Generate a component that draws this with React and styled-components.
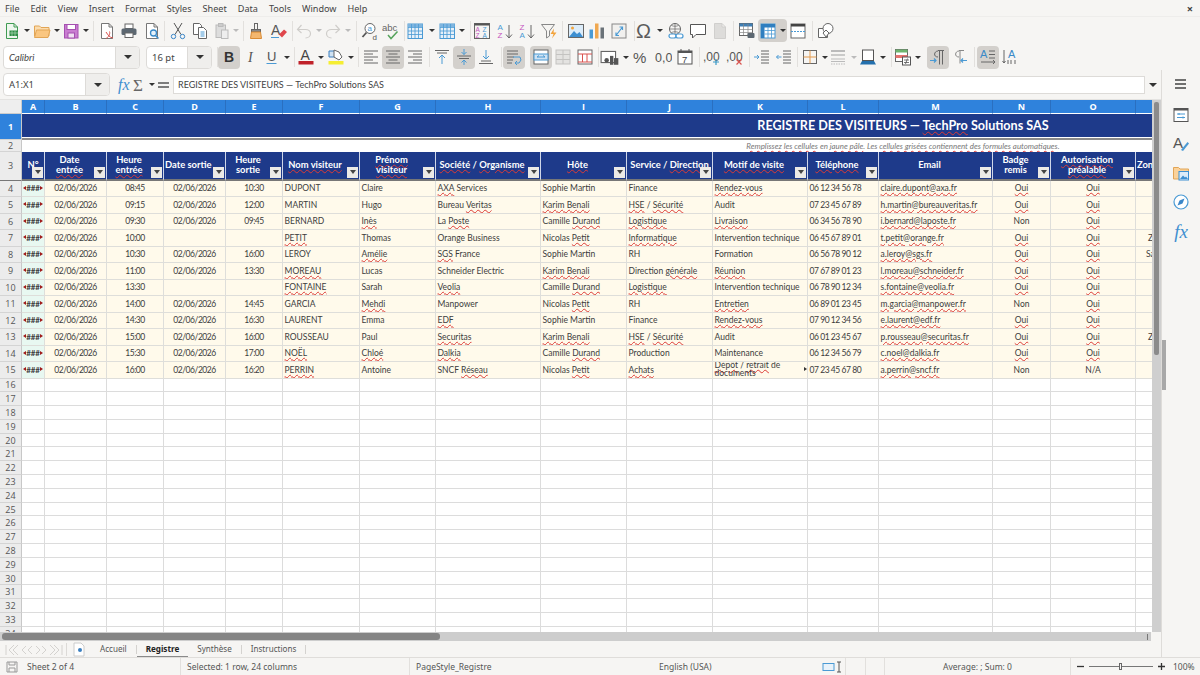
import React from 'react';
import styled, { createGlobalStyle } from 'styled-components';

const GlobalStyle = createGlobalStyle`
  html, body { margin: 0; padding: 0; background: #f6f5f3; }
  * { box-sizing: border-box; }
`;

const UI = `"Noto Sans", "Open Sans", sans-serif`;
const SHEET = `Lato, "Open Sans", sans-serif`;
const BLUE = '#4a9ad4';
const GREY = '#666';

/* ---------- icons ---------- */

const Svg = ({ children, s = 18 }) => (
  <svg width={s} height={s} viewBox="0 0 18 18" fill="none" stroke={GREY} strokeWidth="1">{children}</svg>
);
const Glyph = ({ x, y, size, color = '#555', weight = 400, family = 'Liberation Sans', italic, children }) => (
  <text x={x} y={y} fontSize={size} fill={color} stroke="none" fontWeight={weight} fontFamily={family} fontStyle={italic ? 'italic' : 'normal'}>{children}</text>
);
const Doc = ({ fill = '#fff', stroke = '#777' }) => (
  <path d="M3.5 1.5h7.5l3.5 3.5v11.5h-11zM11 1.5V5h3.5" fill={fill} stroke={stroke} />
);

const NewSheet = () => <Svg><Doc fill="#eef7ee" stroke="#3f9b52" /><rect x="6.5" y="8.5" width="8.5" height="5.5" fill="#2f8f46" stroke="none" /><path d="M9 9v5M12 9v5M7 11h8" stroke="#bfe3c6" strokeWidth=".6" /></Svg>;
const OpenFolder = () => <Svg><path d="M1.5 14V4h5l1.5 1.5h8V14z" fill="#fbdcae" stroke="#e2a555" /><path d="M1.5 15.5 3.5 8h13.5l-2 7.5z" fill="#fac680" stroke="#e2a555" /></Svg>;
const SaveDisk = () => <Svg><rect x="2.5" y="2.5" width="13.5" height="13.5" fill="#c97cd1" stroke="#a550b0" /><rect x="5" y="2.5" width="8.5" height="5" fill="#fff" stroke="#a550b0" /><rect x="6" y="11" width="6.5" height="5" fill="#f0dff2" stroke="#a550b0" /></Svg>;
const ExportPdf = () => <Svg><Doc /><path d="M8 10c2 3 3.500 5.500 7 6M8 16.500c2-1 4.500-4 3.500-7" stroke="#d9534f" /></Svg>;
const Printer = () => <Svg><rect x="5" y="2" width="8" height="4.500" fill="#fff" /><rect x="1.500" y="6.500" width="15" height="6.500" rx="1.500" fill="#5d6872" stroke="none" /><rect x="5" y="11" width="8" height="4.500" fill="#fff" /></Svg>;
const Preview = () => <Svg><Doc /><circle cx="10.500" cy="11" r="3" stroke="#3a8ac8" strokeWidth="1.300" fill="#e6f2fb" /><path d="m12.500 13.500 3 3" stroke="#3a8ac8" strokeWidth="1.500" /></Svg>;
const Scissors = () => <Svg><path d="M5 1 12 12.500M13 1 6 12.500" stroke="#555" /><circle cx="4.500" cy="14.500" r="2.200" stroke="#3a86c8" /><circle cx="13.500" cy="14.500" r="2.200" stroke="#3a86c8" /></Svg>;
const Copy = () => <Svg><path d="M2.500 1.500h6l2 2v9h-8z" fill="#fff" stroke="#666" /><path d="M7.500 5.500h5l3 3v8h-8z" fill="#fff" stroke="#666" /><path d="M9.500 10h4M9.500 12h4M9.500 14h4" stroke={BLUE} /></Svg>;
const Paste = () => <Svg><rect x="3" y="3" width="9.500" height="12.500" fill="#ddd" stroke="#bbb" /><rect x="5.500" y="1.500" width="4.500" height="3" fill="#ccc" stroke="#bbb" /><rect x="8.500" y="8" width="6.500" height="8.500" fill="#eee" stroke="#bbb" /></Svg>;
const Brush = () => <Svg><rect x="7.500" y="1.500" width="3" height="6" stroke="#666" /><rect x="4.500" y="7.500" width="9" height="2.500" fill="#888" stroke="#666" /><path d="M4.500 10h9l1 6.500h-11z" fill="#f3b76f" stroke="#d98b34" /></Svg>;
const ClearFormat = () => <Svg><Glyph x="1" y="13" size="14">A</Glyph><path d="M1 15.500h8" stroke={BLUE} /><path d="m9 12.500 5-5 3 2.500-5 5.500z" fill="#e0474c" stroke="none" /></Svg>;
const Undo = ({ flip }) => <Svg><g transform={flip ? 'translate(18 0) scale(-1 1)' : undefined}><path d="M6.500 3 2.500 7.500l4 3.500M3 7.500h7.500c3 0 5 2 5 4.200s-2 4.300-5 4.300" stroke="#cfcdca" strokeWidth="1.200" /></g></Svg>;
const Redo = () => <Undo flip />;
const FindReplace = () => <Svg><circle cx="9" cy="6.500" r="5" fill="#fff" stroke="#666" /><path d="M5.500 10.500 1.500 15" stroke="#555" strokeWidth="1.800" /><Glyph x="6.500" y="9" size="8" color={BLUE}>a</Glyph><Glyph x="11.500" y="17.500" size="8" color="#555">d</Glyph></Svg>;
const SpellCheck = () => <Svg><Glyph x="0" y="9" size="9.500" color="#666">abc</Glyph><path d="m6 13 3 3.500 6.500-7" stroke="#56a45c" strokeWidth="1.500" /></Svg>;
const GridTable = ({ head = '#7fb5df', fill = '#e6f0f9' }) => <Svg><rect x="2" y="2" width="14.500" height="14.500" fill={fill} stroke={BLUE} /><rect x="2" y="2" width="14.500" height="3" fill={head} stroke="none" /><path d="M2 5.500h14M2 9h14M2 12.500h14M5.500 2v14M9 2v14M12.500 2v14" stroke={BLUE} strokeWidth=".8" /></Svg>;
const SortGrid = () => <Svg><rect x="1.500" y="1.500" width="15" height="15" stroke="#666" /><rect x="1.500" y="1.500" width="15" height="2" fill="#555" stroke="none" /><Glyph x="2.500" y="9.500" size="6.500" color="#c555c0">A</Glyph><Glyph x="2.500" y="15.500" size="6.500" color="#c555c0">Z</Glyph><Glyph x="9.500" y="9.500" size="6.500" color={BLUE}>Z</Glyph><Glyph x="9.500" y="15.500" size="6.500" color={BLUE}>A</Glyph></Svg>;
const SortUp = ({ top = 'A', low = 'Z', topColor = BLUE, lowColor = '#c555c0' }) => <Svg><Glyph x="1.500" y="8" size="8" color={topColor}>{top}</Glyph><Glyph x="1.500" y="16" size="8" color={lowColor}>{low}</Glyph><path d="M13 3v13M10 12.500l3 3.500 3-3.500" stroke="#666" /></Svg>;
const SortDown = () => <SortUp top="Z" low="A" topColor="#c555c0" lowColor={BLUE} />;
const Funnel = () => <Svg><path d="M1.500 2.500h13L9.500 9v5l-3 2V9z" stroke="#888" /><path d="M14 6.500 10.500 12h3l-1.500 4.500L16.500 10.500h-3z" fill="#f2a33c" stroke="none" /></Svg>;
const Picture = () => <Svg><rect x="1.500" y="2.500" width="15" height="13" fill="#dcecf9" stroke="#666" /><circle cx="5.500" cy="6" r="1.500" fill="#f2a33c" stroke="none" /><path d="M2 15l5-6 3 3 2.500-2 3.500 5z" fill="#3d8fd1" stroke="none" /></Svg>;
const BarChart = () => <Svg><rect x="1.500" y="7.500" width="3.500" height="9" fill="#4a9ad4" stroke="none" /><rect x="7" y="1.500" width="3.500" height="15" fill="#f0a850" stroke="none" /><rect x="12.500" y="5.500" width="3.500" height="11" fill="#6a7278" stroke="none" /></Svg>;
const Pivot = () => <Svg><rect x="2" y="2" width="14" height="14" fill="#f1f0ee" stroke="#888" /><path d="M6 13.500 12.500 5M9.500 5h3v3M6 10.500v3h3" stroke={BLUE} strokeWidth="1.200" /></Svg>;
const Omega = () => <Svg s={20}><Glyph x="1" y="15.500" size="18" color="#5c5c5c">Ω</Glyph></Svg>;
const WebLink = () => <Svg><circle cx="8" cy="7" r="5.500" stroke="#666" /><path d="M2.500 7h11M8 1.500v11M4.500 3.500c2 1 5 1 7 0M4.500 10.500c2-1 5-1 7 0" stroke="#666" strokeWidth=".7" /><rect x="2" y="12" width="7" height="4" rx="2" fill="#fff" stroke={BLUE} strokeWidth="1.200" /><rect x="9" y="12" width="7" height="4" rx="2" fill="#fff" stroke={BLUE} strokeWidth="1.200" /></Svg>;
const Comment = () => <Svg><path d="M1.500 2.500h15v10H7l-3.500 3.500v-3.500h-2z" fill="#fff" stroke="#555" /></Svg>;
const NoteGrey = () => <Svg><Doc fill="#dddcda" stroke="#d0cfcd" /></Svg>;
const PrintArea = () => <Svg><rect x="1.500" y="1.500" width="13" height="12" fill="#fff" stroke="#666" /><rect x="1.500" y="1.500" width="13" height="3" fill="#3f7fb5" stroke="none" /><path d="M1.500 7.500h13M1.500 10.500h13M5.500 2v11M10 2v11" stroke="#888" strokeWidth=".7" /><rect x="9.500" y="11" width="7" height="5" rx="1" fill="#5d6872" stroke="none" /></Svg>;
const Freeze = () => <Svg><rect x="2" y="2" width="14" height="14" fill="#fff" stroke={BLUE} /><rect x="2" y="2" width="14" height="3.500" fill="#2f7fc0" stroke="none" /><rect x="2" y="2" width="3.500" height="14" fill="#2f7fc0" stroke="none" /><path d="M5.500 8.500h10.500M5.500 12h10.500M9 5v11M12.500 5v11" stroke={BLUE} strokeWidth=".8" /></Svg>;
const SplitWin = () => <Svg><rect x="2" y="2" width="14" height="14" fill="#fff" stroke="#666" /><rect x="2" y="2" width="14" height="2.500" fill="#444" stroke="none" /><path d="M2 9.500h14" stroke={BLUE} strokeDasharray="2 1" /></Svg>;
const Shapes = () => <Svg><path d="M1.500 6.500h9v9h-9z" stroke="#666" fill="#fff" /><circle cx="11" cy="6.500" r="5" stroke="#666" fill="#fff" /><path d="m9 8 3 3-3 4-3-4z" stroke="#666" fill="#fff" /></Svg>;

const Bold = () => <Svg><Glyph x="4" y="14" size="14" weight={700} color="#333">B</Glyph></Svg>;
const Italic = () => <Svg><Glyph x="6" y="14" size="14" family="Liberation Serif" italic color="#555">I</Glyph></Svg>;
const Underline = () => <Svg><Glyph x="4" y="12.500" size="13" color="#555">U</Glyph><path d="M3.500 15.500h10" stroke={BLUE} /></Svg>;
const FontColor = () => <Svg><Glyph x="3.500" y="12" size="14" color="#444">A</Glyph><rect x="1.500" y="13" width="15" height="3.500" fill="#c0222a" stroke="none" /></Svg>;
const Highlight = () => <Svg><path d="M2 3h6v6H2z" fill="#cfe2f3" stroke="#3a7fc0" /><path d="M7 2l5 2 3 5-3 3-5-3z" fill="#fff" stroke="#666" /><rect x="1.500" y="13" width="15" height="3.500" fill="#f5ee32" stroke="none" /></Svg>;

const lineRows = [3, 6, 9, 12, 15];
const Align = ({ side }) => (
  <Svg>
    {lineRows.map((y, i) => {
      const short = i % 2 === 1;
      const x1 = !short || side === 'left' ? 2 : side === 'center' ? 4.5 : 7;
      const x2 = !short || side === 'right' ? 16 : side === 'center' ? 13.5 : 11;
      return <path key={y} d={`M${x1} ${y}H${x2}`} stroke="#666" />;
    })}
  </Svg>
);
const AlignLeft = () => <Align side="left" />;
const AlignCenter = () => <Align side="center" />;
const AlignRight = () => <Align side="right" />;
const VTop = () => <Svg><path d="M2 2.500h14M4 5h10" stroke="#666" /><path d="M9 16V7M6 10l3-3 3 3" stroke={BLUE} /></Svg>;
const VMid = () => <Svg><path d="M2 8h14M4 10.500h10" stroke="#666" /><path d="M9 1v5.500M6.500 4 9 6.500 11.500 4M9 17v-5M6.500 14.500 9 12l2.500 2.500" stroke={BLUE} /></Svg>;
const VBottom = () => <Svg><path d="M4 13h10M2 15.500h14" stroke="#666" /><path d="M9 2v9M6 8l3 3 3-3" stroke={BLUE} /></Svg>;
const Wrap = () => <Svg><path d="M2 3h11M2 6h11M2 9h7M2 12h6M2 15h5" stroke="#666" /><path d="M8 9h7l1 3-2 3h-4M12 13l-2 2 2 2" stroke={BLUE} /></Svg>;
const Merge = () => <Svg><rect x="2" y="2" width="14" height="14" fill="#fff" stroke="#666" /><rect x="2" y="6" width="14" height="6" fill="#cfe2f3" stroke={BLUE} /><path d="M5 9h8M5 9l2-1.500M13 9l-2-1.500" stroke={BLUE} /></Svg>;
const MergeGrey = () => <Svg><rect x="2" y="2" width="14" height="14" fill="#e4e3e1" stroke="#c4c3c1" /><path d="M2 6.500h14M2 11.500h14M9 2v14" stroke="#c4c3c1" /></Svg>;
const Unmerge = () => <Svg><rect x="2" y="2" width="14" height="14" fill="#fff" stroke="#666" /><path d="M2 6h14M6.500 6v8M11 6v8M2 14h14" stroke="#d9534f" /></Svg>;
const Currency = () => <Svg s={20}><rect x="1" y="4" width="13" height="10" fill="#fff" stroke="#666" /><circle cx="6" cy="12" r="2" fill="#555" stroke="none" /><rect x="9" y="8" width="3" height="8" fill="#555" stroke="none" /><rect x="12.500" y="10" width="4" height="6" fill="#555" stroke="none" /></Svg>;
const Percent = () => <Svg><Glyph x="1" y="14.500" size="15" color="#555">%</Glyph></Svg>;
const NumberFmt = () => <Svg><Glyph x="1" y="14" size="12.500" color="#555">0,0</Glyph></Svg>;
const DateFmt = () => <Svg><rect x="2" y="3" width="14" height="13" fill="#fff" stroke="#555" /><rect x="2" y="3" width="14" height="2" fill="#555" stroke="none" /><path d="M5 1v3M13 1v3" stroke="#555" /><Glyph x="6" y="14.500" size="9.500" color="#444">7</Glyph></Svg>;
const AddDecimal = () => <Svg><Glyph x="0" y="13" size="12" color="#555">,00</Glyph><path d="M13 11v6M10 14h6" stroke="#3a9ac8" strokeWidth="1.200" /></Svg>;
const DelDecimal = () => <Svg><Glyph x="0" y="13" size="12" color="#555">,00</Glyph><path d="m10.500 11.500 5 5M15.500 11.500l-5 5" stroke="#d9534f" strokeWidth="1.200" /></Svg>;
const Indent = ({ out }) => <Svg><path d="M8 3h8M8 6h8M8 9h8M8 12h8M8 15h8" stroke="#666" /><g transform={out ? 'translate(7.500 0) scale(-1 1)' : undefined}><path d="M1 9h5M4 7l2 2-2 2" stroke={BLUE} /></g></Svg>;
const Outdent = () => <Indent out />;
const Borders = () => <Svg><rect x="2.500" y="2.500" width="13" height="13" stroke="#666" /><path d="M2.500 9h13M9 2.500v13" stroke="#e39a4c" /></Svg>;
const BorderStyle = () => <Svg><path d="M2 3h14" stroke="#bbb" strokeWidth="2" /><path d="M2 7h14" stroke="#bbb" strokeWidth="1.500" /><path d="M2 11h14M2 13.500h14" stroke="#bbb" /><path d="M2 16h14" stroke="#bbb" strokeDasharray="1.500 1" /></Svg>;
const BorderColor = () => <Svg><rect x="3.500" y="2" width="11" height="10.500" fill="#fff" stroke="#555" /><path d="M1 16.500 3 13h12l2 3.500z" fill="#2470ad" stroke="none" /></Svg>;
const CondFormat = () => <Svg><rect x="1.500" y="1.500" width="12" height="12" fill="#fff" stroke="#666" /><rect x="1.500" y="1.500" width="12" height="3" fill="#6eb56e" stroke="none" /><rect x="1.500" y="7" width="12" height="3" fill="#e5736f" stroke="none" /><rect x="8.500" y="9" width="8" height="8" fill="#fff" stroke="#555" /><path d="M10 12h5M10 14.500h5M13.500 10.500l-2 5.500" stroke="#555" strokeWidth=".8" /></Svg>;
const Ltr = () => <Svg><path d="M9 3c-4 0-5 6 0 6M9 2.500h6M10.500 2.500v14M13.500 2.500v14" stroke="#666" /><path d="M1 12.500h6M5 10.500l2 2-2 2" stroke={BLUE} strokeWidth="1.200" /></Svg>;
const Rtl = () => <Svg><path d="M8 3c-4 0-5 6 0 6M8 2.500h5M9 2.500v13" stroke="#888" /><path d="M16 12.500h-6M12 10.500l-2 2 2 2" stroke={BLUE} strokeWidth="1.200" /></Svg>;
const TextHoriz = () => <Svg><Glyph x="1" y="10" size="11" color="#3a8ac8">A</Glyph><path d="M10 3h6M10 6.500h6M10 10h6M2 14h14" stroke="#666" /><path d="M14 12l2 2-2 2" stroke="#666" /></Svg>;
const TextVert = () => <Svg><Glyph x="7" y="10" size="11" color="#3a8ac8">A</Glyph><path d="M3 2v13M1.500 13l1.500 2 1.500-2M7 12v4M10 12v4M14 12v4" stroke="#666" /></Svg>;

const Sum = () => <Svg><Glyph x="2" y="15" size="17" color="#666" family="Liberation Serif">Σ</Glyph></Svg>;
const Equals = () => <Svg><path d="M3 7h11M3 11h11" stroke="#555" strokeWidth="1.500" /></Svg>;
const Hamburger = () => <Svg><path d="M3 5h11M3 9h11M3 13h11" stroke="#444" strokeWidth="1.400" /></Svg>;
const PropsPanel = () => <Svg><rect x="2" y="2.500" width="14" height="13" fill="#fff" stroke="#555" /><rect x="2" y="2.500" width="14" height="2" fill="#555" stroke="none" /><path d="M5 8h8M5 11.500h8" stroke={BLUE} /><path d="M7 7v2M11 10.500v2" stroke={BLUE} /></Svg>;
const StylesPanel = () => <Svg><Glyph x="1" y="13" size="15" color="#555">A</Glyph><path d="m9 15 6.500-8 1.500 1.500L11 16z" fill={BLUE} stroke="none" /></Svg>;
const GalleryPanel = () => <Svg><path d="M1.500 15V3.500h5L8 5h8.500v10z" fill="#fbd29a" stroke="#e2a555" /><rect x="7" y="7.500" width="9.500" height="8.500" fill="#dcecf9" stroke="#3d8fd1" /><path d="M8 15l3-3.500 2 2 1-1 2 2.500" fill="#3d8fd1" stroke="none" /></Svg>;
const NavigatorPanel = () => <Svg><circle cx="9" cy="9" r="7" fill="#fff" stroke={BLUE} strokeWidth="1.200" /><path d="M12.500 5.500 10.500 10.500 5.500 12.500 7.500 7.500z" fill="#3a86c8" stroke="none" /></Svg>;

/* ---------- chrome ---------- */

const Window = styled.div`
  width: 1200px;
  height: 675px;
  overflow: hidden;
  display: flex;
  flex-direction: column;
  background: #f6f5f3;
  font-family: ${UI};
  color: #444;
`;

const MenuBar = styled.div`
  height: 17px;
  flex: none;
  display: flex;
  align-items: center;
  gap: 11px;
  padding: 0 5px;
  font-size: 9.1px;
  border-bottom: 1px solid #eeedeb;
`;

const MenuClose = styled.span`
  margin-left: auto;
  margin-right: 2px;
  font-size: 11px;
  font-weight: 700;
`;

const ToolRow = styled.div`
  height: ${p => p.$h}px;
  flex: none;
  display: flex;
  align-items: center;
`;

const Tool = styled.div`
  flex: none;
  width: ${p => p.$w}px;
  height: 23px;
  margin-left: ${p => p.$ml}px;
  display: flex;
  align-items: center;
  justify-content: center;
  gap: 3px;
  border-radius: 4px;
  background: ${p => (p.$active ? '#d3d0cc' : 'transparent')};
`;

const ToolSep = styled.div`
  flex: none;
  width: 1px;
  height: 20px;
  margin-left: ${p => p.$ml}px;
  background: #e2e0dd;
`;

const Caret = styled.span`
  flex: none;
  width: 0;
  height: 0;
  margin-left: ${p => p.$ml || 0}px;
  border-left: 3px solid transparent;
  border-right: 3px solid transparent;
  border-top: 3px solid ${p => (p.$off ? '#bbb' : '#333')};
`;

const Combo = styled.div`
  flex: none;
  width: ${p => p.$w}px;
  height: 23px;
  margin-left: ${p => p.$ml || 0}px;
  display: flex;
  background: #fff;
  border: 1px solid #dddbd8;
  border-radius: 4px;
  overflow: hidden;
  font-size: 9.5px;
`;

const ComboText = styled.div`
  flex: 1;
  display: flex;
  align-items: center;
  padding-left: 5px;
  font-style: ${p => (p.$italic ? 'italic' : 'normal')};
  font-family: ${p => (p.$italic ? SHEET : UI)};
`;

const ComboButton = styled.div`
  flex: none;
  width: 24px;
  display: flex;
  align-items: center;
  justify-content: center;
  background: #efeeec;
  border-left: 1px solid #dddbd8;
  ${Caret} {
    border-left-width: 4px;
    border-right-width: 4px;
    border-top-width: 4px;
  }
`;

const Body = styled.div`
  flex: 1;
  min-height: 0;
  display: flex;
`;

const LeftPane = styled.div`
  width: 1161px;
  flex: none;
  display: flex;
  flex-direction: column;
`;

const FormulaBar = styled.div`
  height: 30px;
  flex: none;
  display: flex;
  align-items: center;
  padding: 0 0 0 3px;
  border-bottom: 1px solid #e4e3e1;
`;

const FxText = styled.span`
  display: inline-block;
  min-width: 13px;
  font-family: "Liberation Serif", serif;
  font-style: italic;
  font-size: ${p => p.$size}px;
  color: #3f8fd0;
  line-height: 1;
`;

const FormulaTools = styled.div`
  flex: none;
  width: 63px;
  display: flex;
  align-items: center;
  padding: 0 0 0 8px;
`;

const FormulaInput = styled.div`
  flex: none;
  width: 972px;
  height: 18px;
  display: flex;
  align-items: center;
  padding-left: 4px;
  background: #fff;
  border: 1px solid #dddbd8;
  font-family: ${SHEET};
  font-size: 9px;
  color: #444;
`;

const FormulaEnd = styled.div`
  flex: 1;
  display: flex;
  justify-content: center;
  ${Caret} {
    border-left-width: 4px;
    border-right-width: 4px;
    border-top-width: 4px;
  }
`;

const SheetRow = styled.div`
  flex: none;
  height: 532px;
  display: flex;
`;

const SheetView = styled.div`
  width: 1152px;
  flex: none;
  overflow: hidden;
  background: #fff;
`;

const Grid = styled.div`
  display: grid;
  width: 1784px;
  grid-template-columns: 22px 23px 62px 57px 62px 57px 77px 76px 105px 86px 86px 95px 71px 114px 58px 85px 60px 588px;
  grid-template-rows: 14px 26px 12px 28.5px repeat(12, 16.5px) repeat(20, 13.8px);
  font-family: ${SHEET};
`;

const Corner = styled.div`
  background: #eeeeee;
  border-right: 1px solid #ccc;
  border-bottom: 1px solid #ccc;
`;

const ColHead = styled.div`
  display: flex;
  align-items: center;
  justify-content: center;
  background: #2f82dc;
  color: #fff;
  font-family: "Open Sans", sans-serif;
  font-weight: 700;
  font-size: 9px;
  border-right: 1px solid #2a6fc0;
  border-bottom: 1px solid #fff;
`;

const RowHead = styled.div`
  display: flex;
  align-items: center;
  justify-content: center;
  font-family: "Open Sans", sans-serif;
  font-size: 9px;
  background: ${p => (p.$on ? '#2f82dc' : '#ececec')};
  color: ${p => (p.$on ? '#fff' : '#555')};
  font-weight: ${p => (p.$on ? 700 : 400)};
  border-right: 1px solid #c8c8c8;
  border-bottom: 1px solid ${p => (p.$heavy ? '#777' : '#d4d4d4')};
`;

const TitleCell = styled.div`
  grid-column: 2 / -1;
  display: flex;
  align-items: center;
  justify-content: center;
  height: 23px;
  background: #1e3a8a;
  color: #fff;
  font-weight: 700;
  font-size: 12.6px;
  box-shadow: 0 1px 0 #fff, 0 3px 0 #8a8a8a;
`;

const NoteCell = styled.div`
  grid-column: 2 / -1;
  display: flex;
  align-items: center;
  justify-content: center;
  color: #777;
  font-size: 7.9px;
  font-style: italic;
  line-height: 1;
  overflow: hidden;
  padding-top: 2px;
`;

// the autofilter button takes room at the right, so labels sit left of the cell's middle
const HeadCell = styled.div`
  position: relative;
  display: flex;
  align-items: center;
  justify-content: ${p => (p.$left ? 'flex-start' : 'center')};
  padding: 0 ${p => (p.$left ? 1 : p.$tight ? 2 : 14)}px 0 ${p => (p.$left ? 1 : 2)}px;
  background: #1e3a8a;
  color: #fff;
  font-size: 9.4px;
  font-weight: 700;
  line-height: 10.5px;
  text-align: center;
  white-space: pre-line;
  overflow: hidden;
  border-right: 1px solid #cfd6e8;
  border-bottom: 2px solid #777;
`;

const HeadLabel = styled.span`
  margin-top: ${p => (p.$two ? 1 : 0)}px;
`;

const FilterBtn = styled.span`
  position: absolute;
  right: 1px;
  bottom: 1px;
  width: 11px;
  height: 11px;
  display: flex;
  align-items: center;
  justify-content: center;
  background: #eceae6;
  ${Caret} {
    border-left-width: 3.500px;
    border-right-width: 3.500px;
    border-top-width: 4px;
    border-top-color: #444;
  }
`;

const Cell = styled.div`
  display: flex;
  align-items: center;
  justify-content: ${p => (p.$center ? 'center' : 'flex-start')};
  position: relative;
  padding: 0 1.500px;
  background: ${p => p.$bg || '#fffaeb'};
  border-right: 1px solid #dededa;
  border-bottom: 1px solid #dededa;
  font-size: 8.500px;
  line-height: 8.500px;
  letter-spacing: ${p => (p.$num ? '-0.45px' : '0')};
  color: #3c3c3c;
  white-space: nowrap;
  overflow: hidden;
`;

const ZoneCell = styled(Cell)`
  padding-left: ${p => p.$pl}px;
`;

const WrapText = styled.span`
  white-space: normal;
  line-height: 7.800px;
  padding-right: 4px;
`;

const Clip = styled.span`
  position: absolute;
  right: 0;
  top: 50%;
  margin-top: -2.500px;
  width: 0;
  height: 0;
  border-top: 2.500px solid transparent;
  border-bottom: 2.500px solid transparent;
  border-left: 3px solid #333;
`;

const ClipLeft = styled(Clip)`
  right: auto;
  left: 1px;
  border-left: 0;
  border-right: 3px solid #a01818;
`;

const ClipRight = styled(Clip)`
  border-left-color: #a01818;
  right: 1px;
`;

const Hashes = styled.span`
  font-weight: 700;
  font-size: 8px;
  letter-spacing: -0.2px;
`;

const EmptyCell = styled.div`
  border-right: 1px solid #dcdcdc;
  border-bottom: 1px solid #dcdcdc;
  background: #fff;
`;

const Squiggle = styled.span`
  text-decoration: underline wavy #dc3a35;
  text-decoration-thickness: 0.800px;
  text-underline-offset: 1px;
`;

const VScroll = styled.div`
  flex: 1;
  background: #cfcfcf;
  padding: 2px 2px 0;
`;

const VThumb = styled.div`
  height: 253px;
  background: #8b8b8b;
  border-radius: 2px;
`;

const HScroll = styled.div`
  flex: none;
  height: 9px;
  width: 1151px;
  background: #cdcdcd;
  display: flex;
  align-items: center;
  justify-content: space-between;
  padding: 0 2px;
`;

const HThumb = styled.div`
  width: 438px;
  height: 7px;
  border-radius: 3px;
  background: #858585;
`;

const HEnd = styled.div`
  width: 1px;
  height: 6px;
  background: #777;
  margin-right: 1px;
`;

const TabBar = styled.div`
  height: 17px;
  flex: none;
  display: flex;
  align-items: center;
  font-size: 8.100px;
`;

const TabNav = styled.div`
  width: 67px;
  padding-left: 5px;
  flex: none;
  display: flex;
  align-items: center;
  border-right: 1px solid #dcdad7;
  height: 13px;
`;

const AddTab = styled.div`
  width: 24px;
  flex: none;
  display: flex;
  justify-content: center;
`;

const Tab = styled.div`
  height: 17px;
  display: flex;
  align-items: center;
  padding: 0 9px;
  color: ${p => (p.$on ? '#222' : '#555')};
  font-weight: ${p => (p.$on ? 700 : 400)};
  border-bottom: ${p => (p.$on ? '2px solid #8a8a8a' : '2px solid transparent')};
`;

const TabSep = styled.div`
  width: 1px;
  height: 9px;
  background: #d4d2cf;
`;

const Sidebar = styled.div`
  position: relative;
  flex: 1;
  border-left: 1px solid #dedcd9;
  display: flex;
  flex-direction: column;
  align-items: center;
  gap: 11px;
  padding-top: 2px;
`;

const SideMenu = styled.div`
  height: 24px;
  margin-bottom: -1px;
  display: flex;
  align-items: center;
`;

const SideIcon = styled.div`
  height: 18px;
  display: flex;
  align-items: center;
  justify-content: center;
`;

const Grip = styled.div`
  position: absolute;
  left: 0;
  top: 270px;
  width: 4px;
  height: 50px;
  background: #a8a8a8;
`;

const StatusBar = styled.div`
  height: 18px;
  flex: none;
  display: flex;
  align-items: center;
  border-top: 1px solid #dfddda;
  font-size: 8.500px;
  color: #555;
`;

const StatusCell = styled.div`
  flex: none;
  width: ${p => p.$w}px;
  height: 100%;
  display: flex;
  align-items: center;
  gap: ${p => p.$gap || 0}px;
  justify-content: ${p => (p.$center ? 'center' : 'flex-start')};
  padding-left: ${p => p.$pl || 0}px;
  border-right: ${p => (p.$line ? '1px solid #e2e0dd' : '0')};
`;

const ZoomTrack = styled.div`
  position: relative;
  width: 64px;
  height: 1px;
  background: #777;
`;

const ZoomThumb = styled.span`
  position: absolute;
  left: 30px;
  top: -3px;
  width: 3px;
  height: 7px;
  background: #f6f5f3;
  border: 1px solid #666;
`;

/* ---------- data ---------- */

const columns = ['A', 'B', 'C', 'D', 'E', 'F', 'G', 'H', 'I', 'J', 'K', 'L', 'M', 'N', 'O', ''];

const headers = [
  { t: 'N°', tight: true },
  { t: 'Date\n~entrée~' },
  { t: 'Heure\n~entrée~' },
  { t: 'Date sortie', left: true },
  { t: 'Heure\nsortie' },
  { t: '~Nom visiteur~' },
  { t: '~Prénom~\n~visiteur~' },
  { t: '~Société~ / ~Organisme~' },
  { t: '~Hôte~' },
  { t: 'Service / ~Direction~', tight: true },
  { t: '~Motif de visite~' },
  { t: '~Téléphone~' },
  { t: 'Email' },
  { t: 'Badge\nremis' },
  { t: '~Autorisation~\n~préalable~' },
  { t: 'Zon', left: true, nofilter: true },
];

const D = '02/06/2026';
const rows = [
  ['08:45', D, '10:30', 'DUPONT', 'Claire', '~AXA~ Services', 'Sophie Martin', 'Finance', '~Rendez-vous~', '06 12 34 56 78', '~claire.dupont@axa.fr~', '~Oui~', '~Oui~', ''],
  ['09:15', D, '12:00', 'MARTIN', 'Hugo', 'Bureau ~Veritas~', '~Karim Benali~', '~HSE~ / ~Sécurité~', 'Audit', '07 23 45 67 89', '~h.martin@bureauveritas.fr~', '~Oui~', '~Oui~', ''],
  ['09:30', D, '09:45', 'BERNARD', '~Inès~', 'La ~Poste~', 'Camille ~Durand~', '~Logistique~', '~Livraison~', '06 34 56 78 90', '~i.bernard@laposte.fr~', 'Non', '~Oui~', ''],
  ['10:00', '', '', '~PETIT~', 'Thomas', 'Orange Business', 'Nicolas ~Petit~', '~Informatique~', 'Intervention technique', '06 45 67 89 01', '~t.petit@orange.fr~', '~Oui~', '~Oui~', 'Z'],
  ['10:30', D, '16:00', 'LEROY', '~Amélie~', '~SGS~ France', 'Sophie Martin', 'RH', 'Formation', '06 56 78 90 12', '~a.leroy@sgs.fr~', '~Oui~', '~Oui~', 'Sa'],
  ['11:00', D, '13:30', '~MOREAU~', 'Lucas', 'Schneider Electric', '~Karim Benali~', 'Direction ~générale~', '~Réunion~', '07 67 89 01 23', '~l.moreau@schneider.fr~', '~Oui~', '~Oui~', ''],
  ['13:30', '', '', '~FONTAINE~', 'Sarah', '~Veolia~', 'Camille ~Durand~', '~Logistique~', 'Intervention technique', '06 78 90 12 34', '~s.fontaine@veolia.fr~', '~Oui~', '~Oui~', ''],
  ['14:00', D, '14:45', 'GARCIA', '~Mehdi~', 'Manpower', 'Nicolas ~Petit~', 'RH', '~Entretien~', '06 89 01 23 45', '~m.garcia@manpower.fr~', 'Non', '~Oui~', ''],
  ['14:30', D, '16:30', 'LAURENT', 'Emma', '~EDF~', 'Sophie Martin', 'Finance', '~Rendez-vous~', '07 90 12 34 56', '~e.laurent@edf.fr~', '~Oui~', '~Oui~', ''],
  ['15:00', D, '16:00', 'ROUSSEAU', 'Paul', '~Securitas~', '~Karim Benali~', '~HSE~ / ~Sécurité~', 'Audit', '06 01 23 45 67', '~p.rousseau@securitas.fr~', '~Oui~', '~Oui~', 'Z'],
  ['15:30', D, '17:00', '~NOËL~', '~Chloé~', '~Dalkia~', 'Camille ~Durand~', 'Production', 'Maintenance', '06 12 34 56 79', '~c.noel@dalkia.fr~', '~Oui~', '~Oui~', ''],
  ['16:00', D, '16:20', '~PERRIN~', 'Antoine', 'SNCF ~Réseau~', 'Nicolas ~Petit~', '~Achats~', '~Dépôt~ / ~retrait~ de documents', '07 23 45 67 80', '~a.perrin@sncf.fr~', 'Non', 'N/A', ''],
];

const SEP = 'sep';
const CARET = 'caret';
const CARET_OFF = 'caretOff';

const topTools = [
  [NewSheet, 12], [CARET, 27], [OpenFolder, 42], [CARET, 57], [SaveDisk, 71], [CARET, 86], [SEP, 93],
  [ExportPdf, 107], [Printer, 129], [Preview, 152], [SEP, 164], [Scissors, 178], [Copy, 200], [Paste, 222], [CARET_OFF, 236], [SEP, 243],
  [Brush, 256], [ClearFormat, 279], [SEP, 292], [Undo, 304], [CARET_OFF, 319], [Redo, 333], [CARET_OFF, 348], [SEP, 356],
  [FindReplace, 370], [SpellCheck, 391], [SEP, 404], [GridTable, 415], [CARET, 432], [GridTable, 447], [CARET, 462], [SEP, 470],
  [SortGrid, 482], [SortUp, 505], [SortDown, 527], [Funnel, 549], [SEP, 562], [Picture, 576], [BarChart, 597], [Pivot, 619], [SEP, 634],
  [Omega, 645], [CARET, 660], [WebLink, 676], [Comment, 698], [NoteGrey, 720], [SEP, 733], [PrintArea, 747],
  [Freeze, 772.500, { w: 29, active: true, caret: true }], [SplitWin, 798], [SEP, 812], [Shapes, 826],
];

const formatTools = [
  [SEP, 217], [Bold, 229, { w: 22, active: true }], [Italic, 251], [Underline, 272], [CARET, 287], [SEP, 294],
  [FontColor, 306], [CARET, 321], [Highlight, 336], [CARET, 351], [SEP, 358],
  [AlignLeft, 371], [AlignCenter, 393, { w: 22, active: true }], [AlignRight, 415], [SEP, 429],
  [VTop, 442], [VMid, 464, { w: 22, active: true }], [VBottom, 486], [SEP, 501],
  [Wrap, 514, { w: 22, active: true }], [Merge, 541, { w: 22, active: true }], [MergeGrey, 563], [Unmerge, 585], [SEP, 598],
  [Currency, 610], [CARET, 626], [Percent, 641], [NumberFmt, 663], [DateFmt, 685], [SEP, 699],
  [AddDecimal, 712], [DelDecimal, 735], [SEP, 749], [Indent, 762], [Outdent, 784], [SEP, 797],
  [Borders, 810], [CARET, 825], [BorderStyle, 838], [CARET_OFF, 854], [BorderColor, 868], [CARET, 883], [SEP, 891],
  [CondFormat, 903], [CARET, 918], [SEP, 927], [Ltr, 938, { w: 22, active: true }], [Rtl, 960], [SEP, 974],
  [TextHoriz, 988, { w: 22, active: true }], [TextVert, 1010],
];

/* ---------- parts ---------- */

// ~word~ marks what the spell checker underlines
const Marked = ({ text }) => (
  <span>
    {text.split('~').map((part, i) => (i % 2 ? <Squiggle key={i}>{part}</Squiggle> : <React.Fragment key={i}>{part}</React.Fragment>))}
  </span>
);

const Tools = ({ items, start = 0 }) => {
  let end = start;
  return items.map(([Kind, center, opts = {}], i) => {
    if (Kind === SEP) {
      const ml = center - end;
      end = center + 1;
      return <ToolSep key={i} $ml={ml} />;
    }
    if (Kind === CARET || Kind === CARET_OFF) {
      const ml = center - 3 - end;
      end = center + 3;
      return <Caret key={i} $ml={ml} $off={Kind === CARET_OFF} />;
    }
    const w = opts.w || 20;
    const ml = center - w / 2 - end;
    end = center + w / 2;
    return (
      <Tool key={i} $w={w} $ml={ml} $active={opts.active}>
        <Kind />
        {opts.caret && <Caret />}
      </Tool>
    );
  });
};

const DataRow = ({ n, row }) => {
  const [inTime, outDate, outTime, ...rest] = row;
  const zone = rest.pop();
  return (
    <>
      <RowHead>{n}</RowHead>
      <Cell $center $bg="#e8f8f1">
        <ClipLeft /><Hashes>###</Hashes><ClipRight />
      </Cell>
      <Cell $center $num>{D}</Cell>
      <Cell $center $num>{inTime}</Cell>
      <Cell $center $num>{outDate}</Cell>
      <Cell $center $num>{outTime}</Cell>
      {rest.map((val, i) => {
        if (val.includes('documents')) {
          return <Cell key={i}><WrapText><Marked text={val} /></WrapText><Clip /></Cell>;
        }
        return <Cell key={i} $center={i === 8 || i === 9} $num={i === 6}><Marked text={val} /></Cell>;
      })}
      <ZoneCell $pl={zone === 'Sa' ? 10 : 12}>{zone}</ZoneCell>
      <Cell />
    </>
  );
};

const EmptyRow = ({ n }) => (
  <>
    <RowHead>{n}</RowHead>
    {columns.map((c, i) => <EmptyCell key={i} />)}
    <EmptyCell />
  </>
);

const Sheet = () => (
  <Grid>
    <Corner />
    {columns.map((c, i) => <ColHead key={i}>{c}</ColHead>)}
    <ColHead />

    <RowHead $on>1</RowHead>
    <TitleCell><Marked text="REGISTRE DES VISITEURS — ~TechPro~ Solutions SAS" /></TitleCell>

    <RowHead>2</RowHead>
    <NoteCell><Marked text="~Remplissez les cellules~ en ~jaune pâle~. Les ~cellules grisées contiennent des formules automatiques~." /></NoteCell>

    <RowHead $heavy>3</RowHead>
    {headers.map((h, i) => (
      <HeadCell key={i} $left={h.left} $tight={h.tight}>
        <HeadLabel><Marked text={h.t} /></HeadLabel>
        {!h.nofilter && <FilterBtn><Caret /></FilterBtn>}
      </HeadCell>
    ))}
    <HeadCell />

    {rows.map((row, i) => <DataRow key={i} n={i + 4} row={row} />)}
    {Array.from({ length: 20 }, (_, i) => <EmptyRow key={i} n={i + 16} />)}
  </Grid>
);

export default function App() {
  return (
    <Window>
      <GlobalStyle />
      <MenuBar>
        {['File', 'Edit', 'View', 'Insert', 'Format', 'Styles', 'Sheet', 'Data', 'Tools', 'Window', 'Help'].map(m => (
          <span key={m}>{m}</span>
        ))}
        <MenuClose>×</MenuClose>
      </MenuBar>

      <ToolRow $h={27}><Tools items={topTools} /></ToolRow>

      <ToolRow $h={26}>
        <Combo $w={137} $ml={3}>
          <ComboText $italic>Calibri</ComboText>
          <ComboButton><Caret /></ComboButton>
        </Combo>
        <Combo $w={66} $ml={6}>
          <ComboText>16 pt</ComboText>
          <ComboButton><Caret /></ComboButton>
        </Combo>
        <Tools items={formatTools} start={212} />
      </ToolRow>

      <Body>
        <LeftPane>
          <FormulaBar>
            <Combo $w={107}>
              <ComboText>A1:X1</ComboText>
              <ComboButton><Caret /></ComboButton>
            </Combo>
            <FormulaTools>
              <FxText $size={16}>fx</FxText>
              <Sum />
              <Caret />
              <Equals />
            </FormulaTools>
            <FormulaInput>REGISTRE DES VISITEURS — TechPro Solutions SAS</FormulaInput>
            <FormulaEnd><Caret /></FormulaEnd>
          </FormulaBar>

          <SheetRow>
            <SheetView><Sheet /></SheetView>
            <VScroll><VThumb /></VScroll>
          </SheetRow>

          <HScroll><HThumb /><HEnd /></HScroll>

          <TabBar>
            <TabNav>
              <svg width="58" height="12" viewBox="0 0 58 12" fill="none" stroke="#d4d2cf">
                <path d="M1 1v10M9 1 4 6l5 5M13 1 8 6l5 5M21 2 17 6l4 4M27 2l-4 4 4 4M31 2l4 4-4 4M37 2l4 4-4 4M45 1l5 5-5 5M49 1l5 5-5 5M57 1v10" />
              </svg>
            </TabNav>
            <AddTab>
              <svg width="12" height="15" viewBox="0 0 12 15" fill="none">
                <path d="M1 1h7l3 3v10H1z" fill="#fff" stroke="#ccc" />
                <circle cx="7" cy="8" r="2" fill="#3a7fc0" />
              </svg>
            </AddTab>
            <Tab>Accueil</Tab>
            <TabSep />
            <Tab $on>Registre</Tab>
            <Tab>Synthèse</Tab>
            <TabSep />
            <Tab>Instructions</Tab>
            <TabSep />
          </TabBar>
        </LeftPane>

        <Sidebar>
          <SideMenu><Hamburger /></SideMenu>
          <SideIcon><PropsPanel /></SideIcon>
          <SideIcon><StylesPanel /></SideIcon>
          <SideIcon><GalleryPanel /></SideIcon>
          <SideIcon><NavigatorPanel /></SideIcon>
          <SideIcon><FxText $size={19}>fx</FxText></SideIcon>
          <Grip />
        </Sidebar>
      </Body>

      <StatusBar>
        <StatusCell $w={181} $pl={6} $gap={9} $line>
          <svg width="12" height="12" viewBox="0 0 12 12" fill="none" stroke="#999">
            <path d="M1 1h10v10H1zM3 1v3h6V1M3 11V7h6v4" />
          </svg>
          Sheet 2 of 4
        </StatusCell>
        <StatusCell $w={229} $pl={6} $line>Selected: 1 row, 24 columns</StatusCell>
        <StatusCell $w={185} $pl={6}>PageStyle_Registre</StatusCell>
        <StatusCell $w={220} $pl={64}>English (USA)</StatusCell>
        <StatusCell $w={31} $pl={7} $line>
          <svg width="22" height="12" viewBox="0 0 22 12" fill="none">
            <rect x="1" y="2.500" width="11" height="7" stroke="#4a9ad4" fill="#e8f2fa" />
            <path d="M15 1h4M15 11h4M17 1v10" stroke="#555" />
          </svg>
        </StatusCell>
        <StatusCell $w={20} $line />
        <StatusCell $w={19} $line />
        <StatusCell $w={186} $center $line>Average: ; Sum: 0</StatusCell>
        <StatusCell $w={102} $pl={5} $gap={4}>
          <svg width="9" height="9" viewBox="0 0 9 9" stroke="#333"><path d="M1 4.500h7" strokeWidth="1.300" /></svg>
          <ZoomTrack><ZoomThumb /></ZoomTrack>
          <svg width="9" height="9" viewBox="0 0 9 9" stroke="#333"><path d="M1 4.500h7M4.500 1v7" strokeWidth="1.300" /></svg>
        </StatusCell>
        <StatusCell $w={27}>100%</StatusCell>
      </StatusBar>
    </Window>
  );
}
